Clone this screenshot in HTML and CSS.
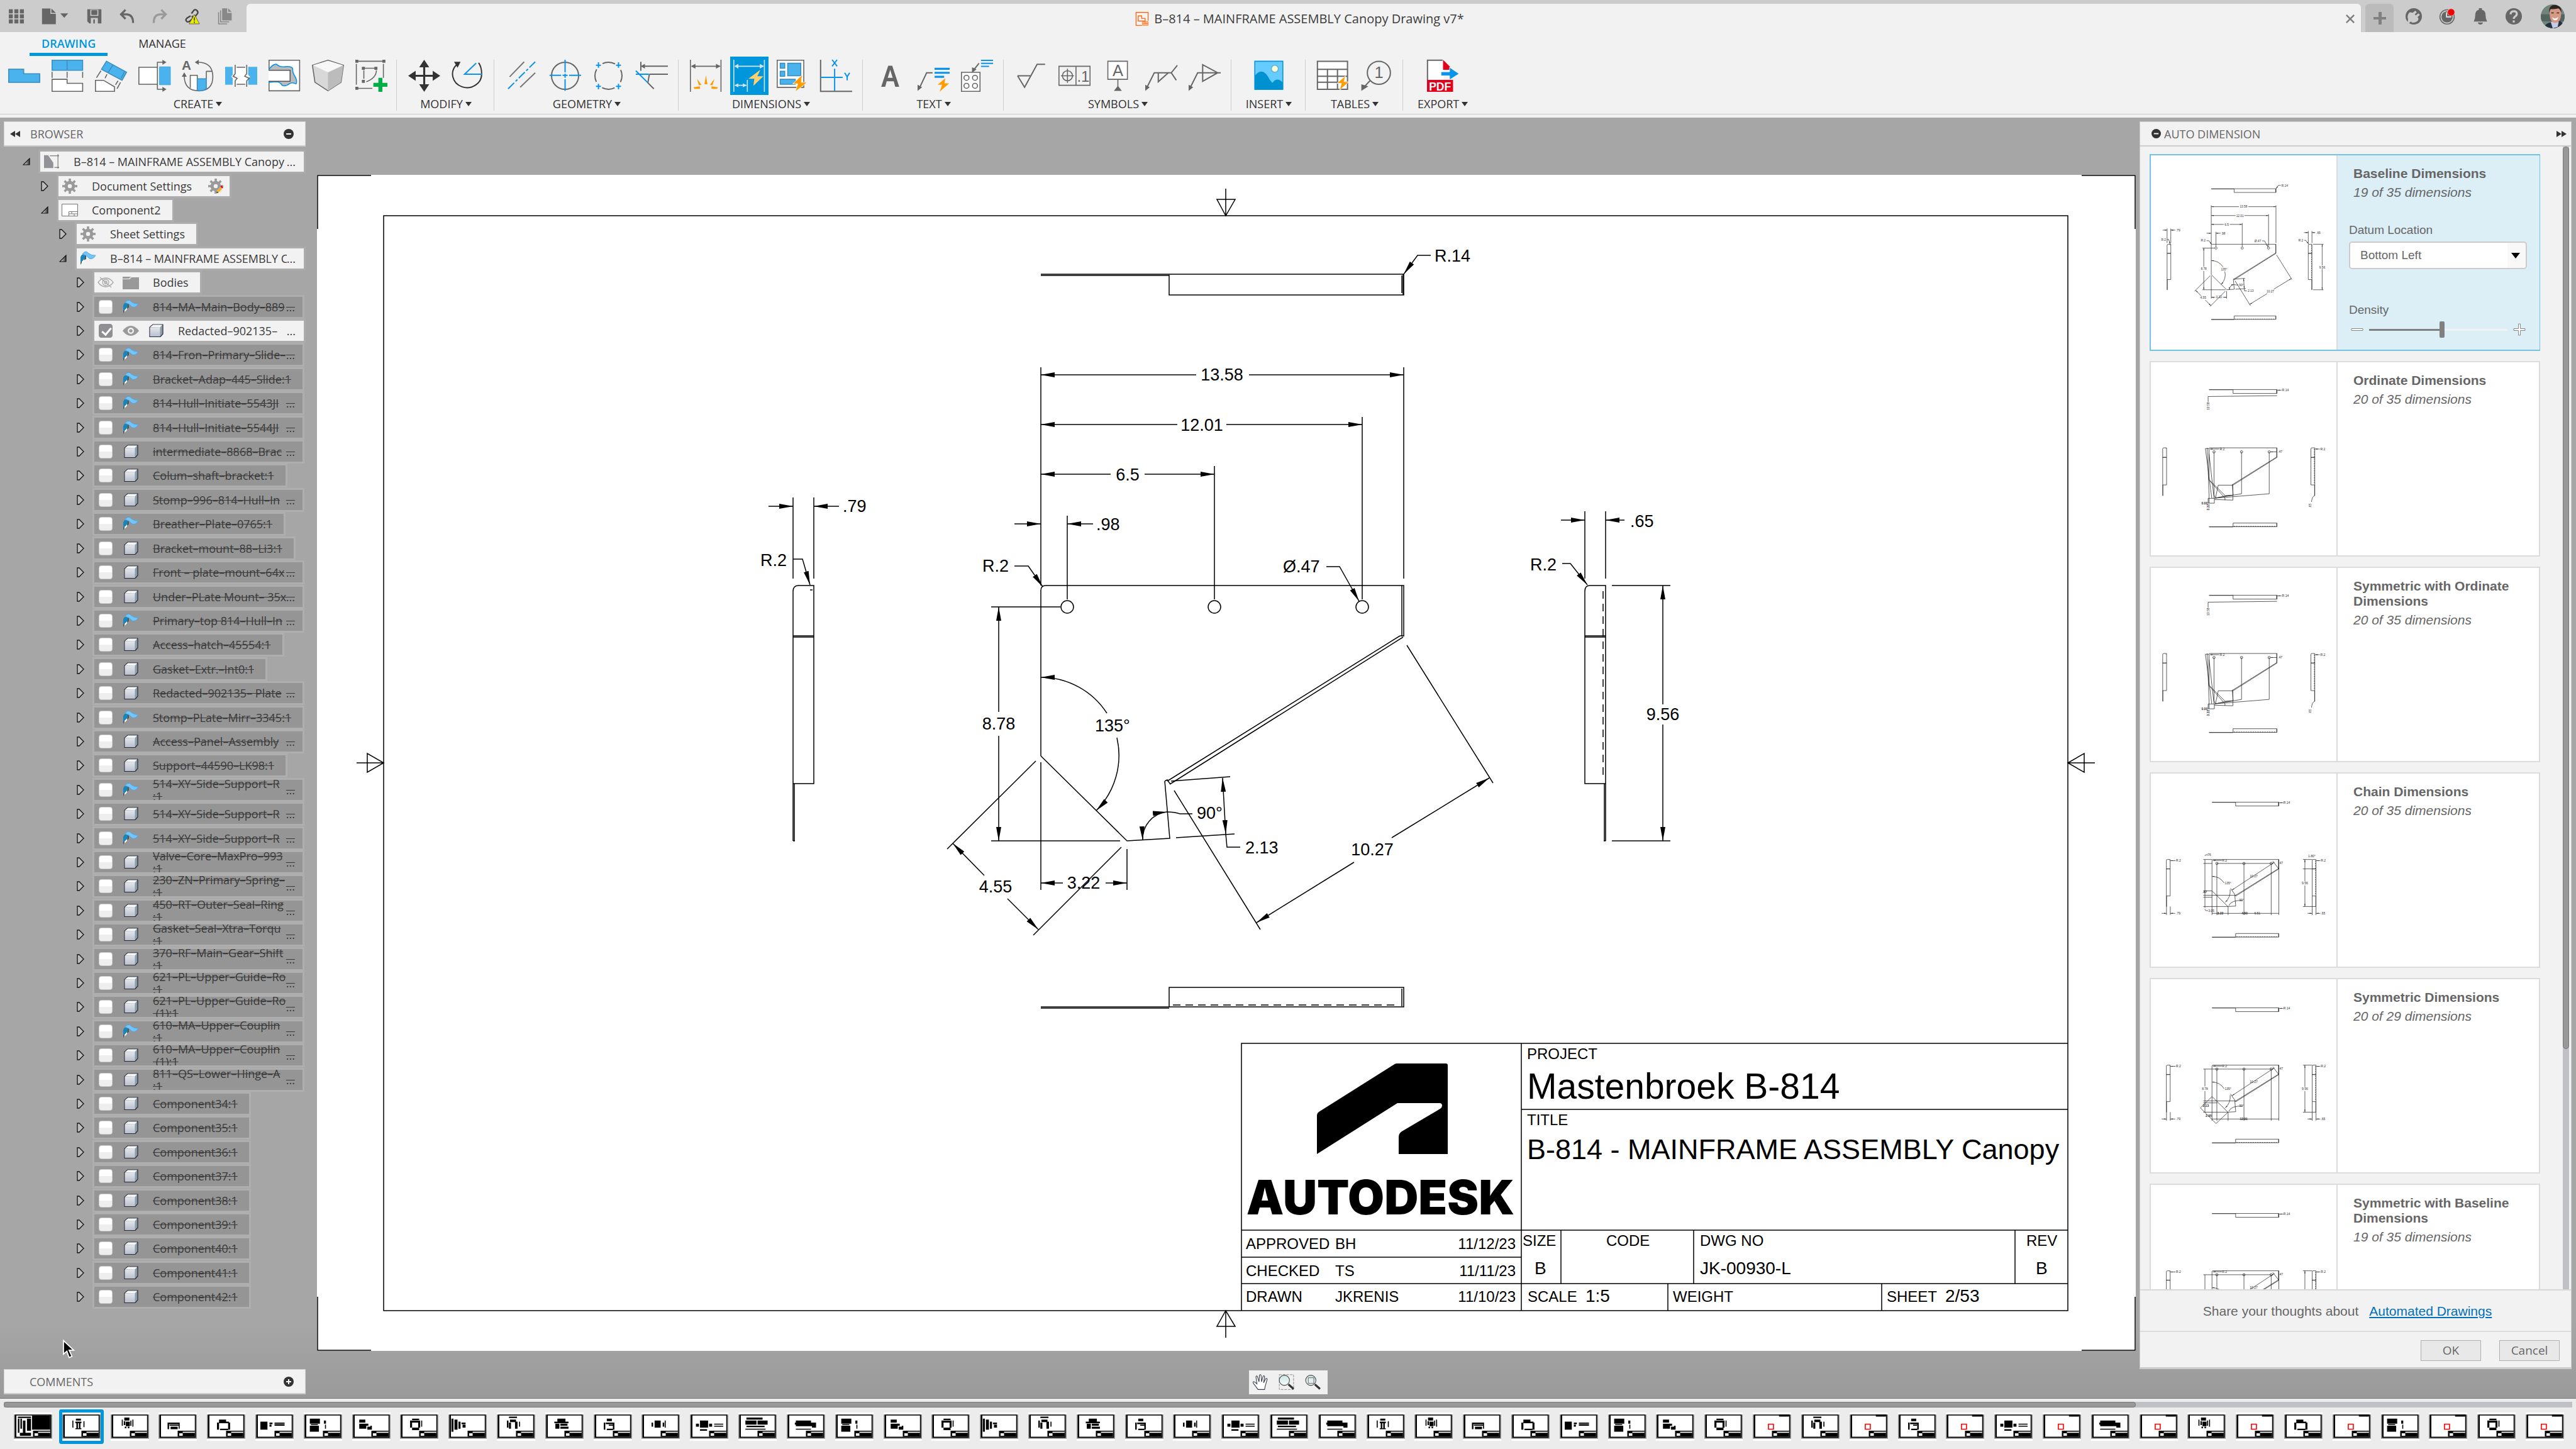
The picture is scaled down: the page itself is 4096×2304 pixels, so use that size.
FILE: index.html
```html
<!DOCTYPE html>
<html lang="en">
<head>
<meta charset="utf-8">
<title>B–814 – MAINFRAME ASSEMBLY Canopy Drawing v7*</title>
<link rel="stylesheet" href="styles.css">
</head>
<body>
<svg class="defs" aria-hidden="true">
  <defs>
    <marker id="ah" viewBox="0 0 22 10" refX="22" refY="5" markerWidth="22" markerHeight="10" markerUnits="userSpaceOnUse" orient="auto-start-reverse"><path d="M0 1L22 5L0 9z" fill="#000"/></marker>
    <linearGradient id="cubeFront" x1="0" y1="0" x2="0" y2="1"><stop offset="0" stop-color="#e4e6ea"/><stop offset="1" stop-color="#b9c0cf"/></linearGradient>
    <linearGradient id="triDark" x1="0" y1="0" x2="1" y2="0"><stop offset="0" stop-color="#fff"/><stop offset="1" stop-color="#333"/></linearGradient>
    <linearGradient id="lens" x1="0" y1="0" x2="0" y2="1"><stop offset="0" stop-color="#c9e6e6"/><stop offset="1" stop-color="#f6fbfb"/></linearGradient>

  <symbol id="i-closed" viewBox="0 0 12 16"><path d="M1 1H4L11 8L4 15H1z" fill="#bcbcbc" stroke="#111" stroke-width="1.300"/></symbol>
  <symbol id="i-open" viewBox="0 0 12 12"><path d="M11 1V11H1z" fill="url(#triDark)" stroke="#111" stroke-width="1.200"/></symbol>
  <symbol id="i-gear" viewBox="0 0 26 26"><g fill="#9a9a9a"><path fill-rule="evenodd" d="M13 4a9 9 0 1 0 0 18a9 9 0 1 0 0-18zM13 9.500a3.500 3.500 0 1 1 0 7a3.500 3.500 0 1 1 0-7z"/><path d="M11 0h4v6h-4zM11 20h4v6h-4zM0 11h6v4H0zM20 11h6v4h-6z"/><path d="M2.500 5.300L5.300 2.500L9 6.200L6.200 9zM17 6.200L20.700 2.500L23.500 5.300L19.800 9zM2.500 20.700L6.200 17L9 19.800L5.300 23.500zM17 19.800L19.800 17L23.500 20.700L20.700 23.500z"/></g></symbol>
  <symbol id="i-gearedit" viewBox="0 0 26 26"><use href="#i-gear"/><path d="M13 26l2-5l8-8l4 4l-8 8z" fill="#f2f2f2"/><path d="M15 21l6-6l3 3l-6 6z" fill="#f9b21c"/><path d="M21 14l2-2l3 3l-2 2z" fill="#f5001e"/><path d="M13.500 25.500l1.500-4l3 3z" fill="#555"/></symbol>
  <symbol id="i-drawing" viewBox="0 0 26 26"><path d="M0 2h7l9 13v9H0z" fill="#929396"/><path d="M10 3h16M24 0v25M18 23h8" fill="none" stroke="#555" stroke-width="1"/></symbol>
  <symbol id="i-page" viewBox="0 0 26 20"><path d="M.5.5h25v19H.500z" fill="#fff" stroke="#777"/><path d="M11.500 19v-6.500h14M11.500 16h14M16 12.500v3.500M20 16v3" fill="none" stroke="#777"/></symbol>
  <symbol id="i-sheet" viewBox="0 0 26 24"><path d="M1 22V11Q2 5 8 6l2 1v6q-5 2-9 9z" fill="#555"/><path d="M1 12Q2 4 8 6v7q-4 1-6 5L1 18z" fill="#1786bd"/><path d="M3 17l4-4v3l-4 4z" fill="#fff"/><path d="M4 5Q9-2 14 4q5 4 11 3q-4 7-10 5q-4-4-6-5z" fill="#74c5fb" stroke="#4ea7dd"/></symbol>
  <symbol id="i-cube" viewBox="0 0 26 24"><path d="M3 6.500L8 2h16v15l-4 4.500H3z" fill="#8a9dab" stroke="#2a2a33" stroke-width="1.200"/><path d="M3.600 6.500H19.500V21H3.600z" fill="url(#cubeFront)"/><path d="M4 6L8.300 2.600H23L19.500 6.500z" fill="#f6f7f8"/></symbol>
  <symbol id="i-folder" viewBox="0 0 26 22"><path d="M0 2h12l2 1h-2l-2 2H0zM0 6h11l3-3h12v19H0z" fill="#999"/></symbol>
  <symbol id="i-eye" viewBox="0 0 26 18"><path d="M0 9Q6 1 13 1t13 8q-6 8-13 8T0 9z" fill="#9a9a9a"/><circle cx="13" cy="9" r="5" fill="#f2f2f2"/><circle cx="13" cy="9" r="2.600" fill="#9a9a9a"/></symbol>
  <symbol id="i-eyeoff" viewBox="0 0 26 18"><g fill="none" stroke="#aaa" stroke-width="1.300"><path d="M1 9Q6 2 13 2t12 7q-5 7-12 7T1 9z"/><circle cx="13" cy="9" r="5"/><circle cx="13" cy="9" r="2"/><path d="M4 1l18 16"/></g></symbol>
  <symbol id="i-minus" viewBox="0 0 16 16"><circle cx="8" cy="8" r="8" fill="#333"/><path d="M4 7h8v2H4z" fill="#fff"/></symbol>
  <symbol id="i-plus" viewBox="0 0 16 16"><circle cx="8" cy="8" r="8" fill="#333"/><path d="M4 7h8v2H4zM7 4h2v8H7z" fill="#fff"/></symbol>
  <symbol id="i-rew" viewBox="0 0 16 10"><path d="M0 5L8 0V10zM8 5L16 0V10z" fill="#333"/></symbol>

  <g id="part" class="dl">
    <path d="M1655 436H2232V469H1859V437M1655 438H1859M2229 438V466M2231 436V469"/>
    <path d="M1655 1601H2232V1570H1859V1601M1655 1603H1859M2229 1572V1600"/>
    <path d="M1865 1598H2225" stroke-dasharray="12 8"/>
    <path d="M1261 1337V940Q1261 931 1270 931H1294V1246H1261M1261 1011H1294M1261 1013H1294M1263 1337V1246M1261 1337H1264M1288 938H1292"/>
    <path d="M2553 1337V931H2528Q2520 931 2520 940V1246H2553M2520 1011H2553M2520 1013H2553M2551 1337V1246M2550 1337H2553"/>
    <path d="M2549 940V1240" stroke-dasharray="12 8"/>
    <path d="M1655 1202V939Q1655 931 1663 931H2232V1012M2229 931V1012M2231 1013L1860 1247M2226 1011L1856 1242M2226 1011H2232M1852 1242L1860 1333L1792 1337L1655 1202M1852 1242L1856 1240L1861 1247"/>
    <circle cx="1697" cy="965" r="10"/><circle cx="1931" cy="965" r="10"/><circle cx="2166" cy="965" r="10"/>
  </g>

  <g id="baseline">
    <g class="dl">
      <path d="M1655 584V931M2232 584V920M2166 663V953M1931 741V953M1697 820V953"/>
      <path d="M1738 833H1697" marker-end="url(#ah)"/>
      <path d="M1902 596H1655" marker-end="url(#ah)"/><path d="M1986 596H2232" marker-end="url(#ah)"/>
      <path d="M1872 675H1655" marker-end="url(#ah)"/><path d="M1950 675H2166" marker-end="url(#ah)"/>
      <path d="M1766 754H1655" marker-end="url(#ah)"/><path d="M1820 754H1931" marker-end="url(#ah)"/>
      <path d="M1613 833H1655" marker-end="url(#ah)"/>
      <path d="M1613 900H1635L1658 933" marker-end="url(#ah)"/>
      <path d="M2109 901H2130L2161 956" marker-end="url(#ah)"/>
      <path d="M1576 965H1686M1576 1337H1781"/>
      <path d="M1588 1132V965" marker-end="url(#ah)"/><path d="M1588 1170V1337" marker-end="url(#ah)"/>
      <path d="M1760 1134A125 125 0 0 0 1655 1077" marker-end="url(#ah)"/>
      <path d="M1776 1173A125 125 0 0 1 1743 1289" marker-end="url(#ah)"/>
      <path d="M1647 1210L1506 1350M1783 1347L1643 1487"/>
      <path d="M1565 1392L1515 1341" marker-end="url(#ah)"/><path d="M1602 1429L1651 1478" marker-end="url(#ah)"/>
      <path d="M1655 1212V1415M1792 1350V1415"/>
      <path d="M1690 1404H1655" marker-end="url(#ah)"/><path d="M1758 1404H1792" marker-end="url(#ah)"/>
      <path d="M1855 1291A43 43 0 0 0 1817 1336" marker-end="url(#ah)" marker-start="url(#ah)"/>
      <path d="M1855 1291Q1868 1291 1876 1294H1896"/>
      <path d="M1862 1242L1956 1235M1870 1332L1963 1326M1949 1326L1951 1347H1972"/>
      <path d="M1944 1237L1949 1326" marker-end="url(#ah)" marker-start="url(#ah)"/>
      <path d="M2237 1026L2374 1245M1867 1257L2004 1478"/>
      <path d="M2213 1332L2368 1237" marker-end="url(#ah)"/><path d="M2153 1371L1998 1467" marker-end="url(#ah)"/>
      <path d="M2275 406H2254L2232 436" marker-end="url(#ah)"/>
      <path d="M1261 791V920M1294 791V920"/>
      <path d="M1222 805H1261" marker-end="url(#ah)"/><path d="M1334 805H1294" marker-end="url(#ah)"/>
      <path d="M1261 889H1276L1288 930" marker-end="url(#ah)"/>
      <path d="M2520 813V920M2553 813V920"/>
      <path d="M2482 827H2520" marker-end="url(#ah)"/><path d="M2583 827H2553" marker-end="url(#ah)"/>
      <path d="M2484 896H2497L2524 930" marker-end="url(#ah)"/>
      <path d="M2563 931H2656M2563 1337H2656"/>
      <path d="M2644 1120V931" marker-end="url(#ah)"/><path d="M2644 1152V1337" marker-end="url(#ah)"/>
    </g>
    <g class="dt">
      <text class="m" x="1943" y="605">13.58</text><text class="m" x="1911" y="685">12.01</text><text class="m" x="1793" y="764">6.5</text>
      <text x="1743" y="843">.98</text><text x="1562" y="909">R.2</text><text x="2040" y="910">Ø.47</text>
      <text class="m" x="1588" y="1160">8.78</text><text class="m" x="1769" y="1163">135°</text><text class="m" x="1583" y="1419">4.55</text>
      <text class="m" x="1723" y="1413">3.22</text><text x="1903" y="1302">90°</text><text x="1980" y="1357">2.13</text><text class="m" x="2182" y="1360">10.27</text>
      <text x="2281" y="416">R.14</text><text x="1340" y="814">.79</text><text x="1209" y="900">R.2</text>
      <text x="2592" y="838">.65</text><text x="2433" y="907">R.2</text><text class="m" x="2644" y="1145">9.56</text>
    </g>
  </g>

  <g id="ordinate">
    <g class="dl">
      <path d="M1647 495L2232 488M1647 495V540M1931 965V1321L1709 1358M2166 965V1321L1709 1358M1624 937L1678 1358M1624 937H1655M1655 981L1697 1358M1697 965V1330L1709 1358M1647 1360H1700V1401H1647zM1709 1358L1733 1248H1857V1375L1700 1370M1655 1205L1790 1358V1375M1700 1360L1790 1340L1857 1333M1655 1337V1400M1640 931L1655 1337"/>
      <path d="M1740 941H1663" marker-end="url(#ah)"/><path d="M2595 941H2556" marker-end="url(#ah)"/><path d="M2230 965H2176" marker-end="url(#ah)"/><path d="M2270 441H2236" marker-end="url(#ah)"/>
      <path d="M2551 1337Q2530 1345 2525 1390"/>
    </g>
    <g class="dt"><text x="1590" y="1412" font-weight="bold">0.00</text><text transform="translate(1656 610) rotate(-90)">13.58</text><text transform="translate(1656 1462) rotate(-90)" font-weight="bold">3.22</text><text x="1745" y="950">R.2</text><text x="2240" y="975">.47</text><text x="2600" y="950">R.2</text><text x="2275" y="450">R.14</text><text transform="translate(2525 1440) rotate(-90)">.65</text></g>
  </g>

  <g id="chain">
    <g class="dl">
      <path d="M1655 1202V1410M1697 965V1410M1794 1337V1410M1931 965V1410M2166 965V1410M2232 931V1410M1655 1396H2232M1697 965H2166"/>
      <path d="M1760 1134A125 125 0 0 0 1655 1077" marker-end="url(#ah)"/><path d="M1812 1190A135 135 0 0 1 1770 1300" marker-end="url(#ah)"/>
      <path d="M2194 954L1827 1195" marker-start="url(#ah)" marker-end="url(#ah)"/>
      <path d="M1857 1240L1815 1180M2232 1013L2180 945M1800 1330Q1820 1280 1920 1285"/>
      <path d="M1262 1337V1410M1295 1337V1410M2520 1246V1410M2553 1337V1410M2440 931H2520M2440 1337H2553"/>
      <path d="M1220 1396H1262" marker-end="url(#ah)"/><path d="M1337 1396H1295" marker-end="url(#ah)"/><path d="M2480 1396H2520" marker-end="url(#ah)"/><path d="M2590 1396H2553" marker-end="url(#ah)"/>
      <path d="M2457 1120V931" marker-end="url(#ah)"/><path d="M2457 1155V1337" marker-end="url(#ah)"/>
      <path d="M2270 441H2236" marker-end="url(#ah)"/><path d="M1340 941H1296" marker-end="url(#ah)"/><path d="M2590 941H2556" marker-end="url(#ah)"/><path d="M1740 939H1663" marker-end="url(#ah)"/>
    </g>
    <g class="dt"><text x="1345" y="1405">.79</text><text x="1345" y="950">R.2</text><text x="2595" y="950">R.2</text><text x="2595" y="1405">.65</text><text class="m" x="2457" y="1147">9.56</text><text x="2272" y="450">R.14</text><text class="m" x="2015" y="1085">10.27</text><text x="1742" y="950">R.2</text><text x="1765" y="1145">135°</text><text x="1890" y="1293">90°</text><text x="2230" y="972">.47</text></g>
  </g>
  <g id="chainleft">
    <g class="dl"><path d="M1594 931V1349M1580 931H1655M1580 965H1655M1580 1202H1655M1580 1240H1857M1580 1257H1655M1580 1337H1794M1594 1360Q1594 1375 1620 1372M1594 900Q1594 888 1620 890M2440 1012H2520"/></g>
    <g class="dt"><text x="1610" y="900">.76</text><text x="1622" y="1382">3.05</text><text x="1575" y="1222" font-weight="bold">.87</text><text x="1700" y="1405" font-weight="bold">3.22</text><text x="1910" y="1405" font-weight="bold">4.50</text><text x="2020" y="1405">6.51</text><text x="2485" y="910">1.80°</text></g>
  </g>
  <g id="symleft">
    <g class="dl"><path d="M1594 965V1115M1594 1155V1337M1580 965H1697M1580 1240H1857M1580 1257H1700M1580 1337H1794M1655 1202L1555 1300L1690 1435L1794 1337"/></g>
    <g class="dt"><text class="m" x="1594" y="1147">8.78</text><text x="1575" y="1294" font-weight="bold">2.13</text><text x="1600" y="1378" font-weight="bold">2.95</text><text x="1895" y="1405" font-weight="bold">12.01</text></g>
  </g>
  </defs>
</svg>

<header class="titlebar">
  <div class="quick">
    <button aria-label="Data panel"><svg viewBox="0 0 30 30"><path d="M0 1h8v8H0zM11 1h8v8h-8zM22 1h8v8h-8zM0 11h8v8H0zM11 11h8v8h-8zM22 11h8v8h-8zM0 21h8v8H0zM11 21h8v8h-8zM22 21h8v8h-8z" fill="#666"/></svg></button>
    <button class="file" aria-label="File"><svg viewBox="0 0 56 32"><path d="M1 0h17v11h11v21H1zM20 0l9 9h-9z" fill="#666"/><path d="M38 10h16l-8 9z" fill="#666"/></svg></button>
    <button aria-label="Save"><svg viewBox="0 0 30 30"><path fill-rule="evenodd" d="M1 1h28v28H5l-4-4zM7 2v12h16V2zM8 18v11h14V18zM9 3h12v9H9zM13 21h3v8h-3z" fill="#666"/><path d="M10 3h10v9H10z" fill="#666"/></svg></button>
    <button aria-label="Undo"><svg viewBox="0 0 30 30"><path d="M12 2L3 11l9 9M4 11h11q12 1 12 17" fill="none" stroke="#666" stroke-width="4"/></svg></button>
    <button aria-label="Redo"><svg viewBox="0 0 30 30"><path d="M18 2l9 9l-9 9M26 11H15Q3 12 3 28" fill="none" stroke="#999" stroke-width="4"/></svg></button>
    <button aria-label="Broken links"><svg viewBox="0 0 32 32"><g fill="none" stroke="#444" stroke-width="3"><path d="M14 10l5-7q4-3 7 1t0 7l-5 6q-4 2-6-1"/><path d="M12 15l-8 5q-3 3-1 6t6 1l7-6q2-3-1-6"/></g><path d="M20 12l11 20H9z" fill="#e8ec00" stroke="#444"/><path d="M19 18h2v7h-2zM19 27h2v3h-2z" fill="#333"/></svg></button>
    <button aria-label="Copy"><svg viewBox="0 0 30 32"><path d="M9 0h10v9h9v15H9zM21 0l7 7h-7z" fill="#888"/><path d="M6 4v23h17M2 8v23h17" fill="none" stroke="#888" stroke-width="2"/></svg></button>
  </div>
  <div class="doctab">
    <span class="doctitle"><svg class="docicon" viewBox="0 0 30 32"><path d="M15 31H1V1h28v19" fill="none" stroke="#ff6a13" stroke-width="2"/><path d="M6 9h8v6h8v6H6z" fill="none" stroke="#ff6a13" stroke-width="2"/><path d="M16 22h13v9H16z" fill="#ffb58a" stroke="#ff6a13"/><path d="M16 27h13M22 22v5" stroke="#ff6a13"/></svg>B–814 – MAINFRAME ASSEMBLY Canopy Drawing v7*</span>
    <button class="close" aria-label="Close"><svg viewBox="0 0 16 16"><path d="M1 1l14 14M15 1L1 15" stroke="#808080" stroke-width="3"/></svg></button>
  </div>
  <button class="newtab" aria-label="New tab"><svg viewBox="0 0 20 20"><path d="M8 0h5v8h7v4h-7v8H8v-8H0V8h8z" fill="#808080"/></svg></button>
  <div class="account">
    <button aria-label="Extensions"><svg viewBox="0 0 32 32"><circle cx="16" cy="16" r="16" fill="#666"/><path d="M5 22Q2 14 8 8l6 1l5-4l3 3l-4 4l2 2l5-4l3 3l-5 5l2 1q1 6-5 8q-6 3-10-1l-4 4l-2-2z" fill="#ccc"/></svg></button>
    <button aria-label="Job status"><svg viewBox="0 0 32 32"><circle cx="16" cy="17" r="14" fill="none" stroke="#666" stroke-width="2"/><circle cx="16" cy="17" r="11" fill="#666"/><path d="M15 8v9h9" fill="none" stroke="#eee" stroke-width="2"/><circle cx="24" cy="8" r="7" fill="#f50000" stroke="#ccc"/></svg></button>
    <button aria-label="Notifications"><svg viewBox="0 0 32 32"><path d="M13 0h6v3q7 2 7 10q0 8 3 13H3q3-5 3-13q0-8 7-10zM11 28h10q-1 4-5 4t-5-4z" fill="#666"/></svg></button>
    <button aria-label="Help"><svg viewBox="0 0 32 32"><circle cx="16" cy="16" r="16" fill="#666"/><path d="M10 12q0-6 6-6t6 5q0 3-3 5t-3 5" fill="none" stroke="#ccc" stroke-width="4"/><path d="M14 24h4v4h-4z" fill="#ccc"/></svg></button>
    <button class="avatar" aria-label="Profile"><svg viewBox="0 0 48 48"><path d="M0 0h48v48H0z" fill="#72847c"/><path d="M0 20h48v14H0z" fill="#526560"/><path d="M6 48Q8 38 20 36l8 2l10-5q7 2 8 15z" fill="#26333f"/><path d="M20 35h16l-2 10l-10 3z" fill="#c9cbe6"/><path d="M18 14Q18 3 29 3t12 12q0 22-12 22T18 14z" fill="#d59a86"/><path d="M17 17Q15 1 29 1q14 1 12 16q-2-8-6-9q-9 2-15 1q-2 3-3 8z" fill="#2b2320"/><path d="M23 26q6 5 12-1q-1 7-6 7t-6-6z" fill="#fff"/><path d="M21 17h5M32 17h5" stroke="#3b2a26" stroke-width="2"/></svg></button>
  </div>
</header>

<nav class="tabs"><a class="on" href="#drawing">DRAWING</a><a href="#manage">MANAGE</a></nav>

<section class="ribbon">
  <div class="group first">
    <div class="icons">
      <button aria-label="Base view"><svg viewBox="0 0 64 64"><path d="M1 19h30v9h32v17H1z" fill="#4ab3ee" stroke="#3a8fc0" stroke-width="2"/></svg></button>
      <button aria-label="Projected view"><svg viewBox="0 0 64 64"><path d="M1 1h61v20H1zM31 1v20" fill="#4ab3ee" stroke="#3a8fc0" stroke-width="2"/><path d="M1 24v12M31 24v12M62 24v12" stroke="#666" stroke-width="2"/><path d="M1 39h30v8h31v16H1z" fill="#fff" stroke="#666" stroke-width="2"/></svg></button>
      <button aria-label="Auxiliary view"><svg viewBox="0 0 64 64"><path d="M23 3L63 25L54 41L13 19zM36 10L26 26M59 24L52 37" fill="#4ab3ee" stroke="#3a8fc0" stroke-width="2"/><path d="M12 22L3 36M24 29L20 37M46 42L41 50M51 45L44 58" stroke="#666" stroke-width="2"/><path d="M1 41h16L39 54v9H1z" fill="#fff" stroke="#666" stroke-width="2"/></svg></button>
      <button aria-label="Section view"><svg viewBox="0 0 64 64"><path d="M38 15H1v34H38" fill="#fff" stroke="#666" stroke-width="2"/><path d="M42 14h22v36H42z" fill="#4ab3ee" stroke="#3a9fd8" stroke-width="1"/><path d="M50 5H38V59H50" fill="none" stroke="#666" stroke-width="2"/><path d="M48 0l8 5l-8 5zM48 54l8 5l-8 5z" fill="#666"/></svg></button>
      <button aria-label="Detail view"><svg viewBox="0 0 64 64"><path d="M34 5Q62 6 62 34T34 62T5 34V28" fill="#f2f2f2" stroke="#666" stroke-width="2"/><path d="M26 5l8-5v10zM0 34l5-9l5 9z" fill="#666"/><path d="M17 56V31H31V60M49 23H61M49 23V38" fill="#fff" stroke="#666" stroke-width="2"/><path d="M31 38H49V58Q40 64 31 61z" fill="#4ab3ee" stroke="#3a8fc0" stroke-width="2"/><text x="0" y="20" class="ib" font-size="26">A</text></svg></button>
      <button aria-label="Break view"><svg viewBox="0 0 64 64"><path d="M0 14h15v16l-3 3l3 4v13H0zM46 14h18v36H46V38l4-4l-4-4z" fill="#4ab3ee"/><path d="M20 15H43V49H20z" fill="#fff"/><path d="M20 10V28L16 33L24 37L20 42V54M43 10V28L39 33L48 37L43 42V54M23 15H40M23 49H40" fill="none" stroke="#666" stroke-width="2"/></svg></button>
      <button aria-label="Breakout view"><svg viewBox="0 0 64 64"><path d="M1 1h61v61H1z" fill="#fff" stroke="#666" stroke-width="2"/><path d="M1 19Q9 8 16 9q6 6 16 5q12-2 16 3q0 10 4 15q6 10 3 16q-8-3-12-1q-8 7-16 4q-4-7-12-7L1 45z" fill="#bbb" stroke="#0a93ea" stroke-width="2"/><path d="M0 21H43V43H0" fill="#fff" stroke="#555" stroke-width="2"/></svg></button>
      <button aria-label="Box"><svg viewBox="0 0 64 64"><path d="M32 1L63 11L58 45L32 62L6 45L1 11z" fill="#d8d8d8" stroke="#666" stroke-width="2"/><path d="M32 25L63 11L58 45L32 62z" fill="#bcbcbc"/><path d="M32 2L62 11L32 25L2 11z" fill="#f8f8f8"/></svg></button>
      <button aria-label="Insert sketch"><svg viewBox="0 0 64 64"><path d="M3 3H57M16 17H40M3 57H34M2 8V50M56 8V36M17 21V38M42 21Q42 36 22 44" fill="none" stroke="#666" stroke-width="2"/><path d="M0 0h6v6H0zM54 0h6v6h-6zM13 14h6v6h-6zM38 14h6v6h-6zM13 40h6v6h-6zM0 54h6v6H0z" fill="#666"/><path d="M46 36h8v10h10v8H54v10h-8V54H36v-8h10z" fill="#00ad47"/></svg></button>
    </div>
    <button class="menu">CREATE</button>
  </div>
  <div class="group">
    <div class="icons">
      <button aria-label="Move"><svg viewBox="0 0 64 64"><path d="M32 0l10 15h-8v15h15V22l15 10l-15 10V34H34V49h8L32 64L22 49h8V34H15v8L0 32l15-10v8H30V15H22z" fill="#333"/></svg></button>
      <button aria-label="Rotate"><svg viewBox="0 0 64 64"><path d="M60 28A29 27 0 1 1 10 10M54 6Q60 14 60 28" fill="none" stroke="#333" stroke-width="2.500"/><path d="M5 4h13l-6 12z" fill="#333"/><path d="M61 29H26L49 7" fill="none" stroke="#0a93ea" stroke-width="2.500"/></svg></button>
    </div>
    <button class="menu">MODIFY</button>
  </div>
  <div class="group">
    <div class="icons">
      <button aria-label="Centerline"><svg viewBox="0 0 64 64"><path d="M8 34L37 4M29 55L59 26" stroke="#777" stroke-width="2.500"/><path d="M5 58L59 4" stroke="#0a93ea" stroke-width="2.500" stroke-dasharray="17 4 5 4"/></svg></button>
      <button aria-label="Center mark"><svg viewBox="0 0 64 64"><circle cx="32" cy="32" r="27" fill="none" stroke="#666" stroke-width="2.500"/><path d="M32 0V25M32 28V36M32 39V62M1 31H24M27 31H37M40 31H64" stroke="#0a93ea" stroke-width="2.500"/></svg></button>
      <button aria-label="Center mark pattern"><svg viewBox="0 0 64 64"><circle cx="32" cy="32" r="27" fill="none" stroke="#666" stroke-width="2.500" stroke-dasharray="26 16.400" stroke-dashoffset="13"/><path d="M12 5v11M7 11h10M52 5v11M47 11h10M12 48v11M7 53h10M52 48v11M47 53h10" stroke="#0a93ea" stroke-width="2.500"/></svg></button>
      <button aria-label="Edge extension"><svg viewBox="0 0 64 64"><path d="M10 4V22M12 13H64M27 29H64M27 29L24 46L36 58" fill="none" stroke="#666" stroke-width="2.500"/><path d="M10 13l8-5v10z" fill="#666"/><path d="M0 22L24 46M0 29H26" stroke="#0a93ea" stroke-width="2.500"/></svg></button>
    </div>
    <button class="menu">GEOMETRY</button>
  </div>
  <div class="group">
    <div class="icons">
      <button aria-label="Dimension"><svg viewBox="0 0 64 64"><path d="M1 0V64M62 0V64M4 13H60" stroke="#666" stroke-width="2"/><path d="M2 13l9-5v10zM61 13l-9-5v10z" fill="#666"/><path d="M32 31l3 18h-6zM14 38l9 12l-5 1zM49 38l-9 12l5 1zM7 55l13-2v5H9zM56 55l-13-2v5h11z" fill="#ff9c00"/></svg></button>
      <button class="sel" aria-label="Auto dimension"><svg viewBox="0 0 64 64"><path d="M1 0V64M62 0V64M28 40V64M4 13H60M4 51H26" stroke="#cfe6f2" stroke-width="2"/><path d="M2 13l8-5v10zM61 13l-8-5v10zM2 51l8-4v8zM27 51l-8-4v8z" fill="#cfe6f2"/><path d="M54 20L30 38h12l-2 14l20-19H48z" fill="#ffcf70"/></svg></button>
      <button aria-label="Auto drawing"><svg viewBox="0 0 64 64"><path d="M1 1h53v54H1z" fill="#fff" stroke="#666" stroke-width="2"/><path d="M7 7h9v10H7zM22 7h26v25H22zM7 23h9v10H7zM7 39h30v10H7z" fill="#4ab3ee" stroke="#3a8fc0" stroke-width="2"/><path d="M51 30L32 48h10l-5 16l24-19H49z" fill="#ff9c00" stroke="#fff"/></svg></button>
      <button aria-label="Ordinate dimension"><svg viewBox="0 0 64 64"><path d="M1 0V63H64" fill="none" stroke="#666" stroke-width="2.500"/><path d="M29 18V62M1 35H45M24 0L34 13M34 0L24 13M49 26L54 34L59 26M54 34V41" fill="none" stroke="#0a93ea" stroke-width="2.500"/></svg></button>
    </div>
    <button class="menu">DIMENSIONS</button>
  </div>
  <div class="group">
    <div class="icons">
      <button aria-label="Text"><svg viewBox="0 0 64 64"><path fill-rule="evenodd" d="M14 54L28 12h8L50 54H42L39 43H25L22 54zM27 36H37L32 20z" fill="#666"/></svg></button>
      <button aria-label="Leader text"><svg viewBox="0 0 64 64"><path d="M30 26H18L4 56" fill="none" stroke="#666" stroke-width="2.500"/><path d="M0 62V50l9 5z" fill="#666"/><path d="M34 16h30v4H34zM34 24h30v4H34zM34 32h19v4H34z" fill="#0a93ea"/><path d="M55 37L40 50h9l-5 14l19-17H54z" fill="#ff9c00"/></svg></button>
      <button aria-label="Hole note"><svg viewBox="0 0 64 64"><path d="M1 25h37v38H1z" fill="#fff" stroke="#666" stroke-width="2"/><circle cx="11" cy="36" r="5" class="o"/><circle cx="28" cy="36" r="5" class="o"/><circle cx="11" cy="52" r="5" class="o"/><circle cx="28" cy="52" r="5" class="o"/><path d="M36 7L24 22" stroke="#666" stroke-width="2.500"/><path d="M22 15l9 4l-9 7z" fill="#666"/><path d="M40 0h24v2.500H40zM40 6h24v2.500H40zM40 12h16v2.500H40z" fill="#0a93ea"/></svg></button>
    </div>
    <button class="menu">TEXT</button>
  </div>
  <div class="group">
    <div class="icons">
      <button aria-label="Surface texture"><svg viewBox="0 0 64 64"><path d="M5 32H32M5 32L19 55L44 9H60" fill="none" stroke="#666" stroke-width="2.500"/></svg></button>
      <button aria-label="Feature control frame"><svg viewBox="0 0 64 64"><path d="M1 13h62v38H1zM35 13V51" fill="none" stroke="#666" stroke-width="2"/><circle cx="18" cy="32" r="10" class="o"/><path d="M18 18V46M5 32H31" stroke="#666" stroke-width="2"/><text x="37" y="44" class="ia" font-size="30">.1</text></svg></button>
      <button aria-label="Datum identifier"><svg viewBox="0 0 64 64"><path d="M12 3h39v36H12z" fill="#fff" stroke="#666" stroke-width="2"/><path d="M32 40V55" stroke="#666" stroke-width="2"/><path d="M24 62l8-10l8 10z" fill="#666"/><text x="32" y="33" class="ia" font-size="32" text-anchor="middle">A</text></svg></button>
      <button aria-label="Welding"><svg viewBox="0 0 64 64"><path d="M2 58L18 26H52M26 26V44L46 26M64 11L52 26L62 41" fill="none" stroke="#666" stroke-width="2.500"/><path d="M0 62V50l9 5z" fill="#666"/></svg></button>
      <button aria-label="Taper and slope"><svg viewBox="0 0 64 64"><path d="M2 58L18 26H64M28 10V43L58 26z" fill="none" stroke="#666" stroke-width="2.500"/><path d="M0 62V50l9 5z" fill="#666"/></svg></button>
    </div>
    <button class="menu">SYMBOLS</button>
  </div>
  <div class="group insert">
    <div class="icons">
      <button aria-label="Insert image"><svg viewBox="0 0 64 64"><path d="M4 3h56v56H4z" fill="#66ccff" stroke="#0a93d6" stroke-width="2"/><path d="M4 32Q20 12 34 40l5 6q10-13 21 0v14H4z" fill="#0092d0"/><circle cx="44" cy="18" r="7" fill="#ffffd0" stroke="#5ab4e0" stroke-width="2"/></svg></button>
    </div>
    <button class="menu">INSERT</button>
  </div>
  <div class="group">
    <div class="icons">
      <button aria-label="Table"><svg viewBox="0 0 64 64"><path d="M1 3h60v56H1zM1 19H61M1 33H61M1 45H61M21 19V59M41 19V59" fill="#fff" stroke="#666" stroke-width="2.500"/><path d="M57 32L40 47h9l-4 14l19-17H54z" fill="#ff9c00" stroke="#fff"/></svg></button>
      <button aria-label="Balloon"><svg viewBox="0 0 64 64"><circle cx="37" cy="26" r="23" fill="none" stroke="#666" stroke-width="2.500"/><path d="M19 42L6 56" stroke="#666" stroke-width="2.500"/><path d="M2 49l14 4L2 62z" fill="#666"/><text x="37" y="37" class="ia" font-size="32" text-anchor="middle">1</text></svg></button>
    </div>
    <button class="menu">TABLES</button>
  </div>
  <div class="group last">
    <div class="icons">
      <button aria-label="Export PDF"><svg viewBox="0 0 64 64"><path d="M1 1H33V40H1z" fill="#fff"/><path d="M1 40V1H31" fill="none" stroke="#666" stroke-width="2.500"/><path d="M32 0l14 14v6H32zM0 40h52v24H0z" fill="#e2001a"/><path d="M28 24h17V15L64 28L45 40V32H28z" fill="#0a93ea" stroke="#fff"/><text x="26" y="61" font-size="22" text-anchor="middle" fill="#fff" class="ib">PDF</text></svg></button>
    </div>
    <button class="menu">EXPORT</button>
  </div>
</section>

<main class="work">
  <aside class="left">
    <div class="bar"><svg class="rew"><use href="#i-rew"/></svg><span>BROWSER</span><button aria-label="Collapse"><svg><use href="#i-minus"/></svg></button></div>
    <ul class="tree" id="tree"></ul>
    <div class="bar comments"><span>COMMENTS</span><button aria-label="Expand"><svg><use href="#i-plus"/></svg></button></div>
    <svg class="cursor" viewBox="0 0 20 32"><path d="M1 1V25L7 20L11 31L16 29L11 18H19z" fill="#000" stroke="#fff" stroke-width="2"/></svg>
  </aside>

  <div class="canvas">
    <svg class="sheet" viewBox="504 278 2892 1870" stroke-width="1.500">
      <path d="M504 278H3396V2148H504z" fill="#fff"/>
      <g class="dl">
        <path d="M505 364V279H590M3310 279H3395V364M505 2062V2147H590M3310 2147H3395V2062"/>
        <path d="M610 343H3288V2084H610z"/>
        <path d="M1949 300V343M1935 317H1964L1949 343zM1949 2127V2084M1935 2109H1964L1949 2084zM567 1213H610M584 1198V1228L610 1213zM3331 1213H3288M3314 1198V1228L3288 1213z"/>
      </g>
      <use href="#part"/><use href="#baseline"/>
      <g class="dl">
        <path d="M1974 2084V1659H3288M1974 1956H3288M1974 2041H3288M2419 1764H3288M1974 1999H2419M2419 1659V2084M2482 1956V2041M2693 1956V2041M3204 1956V2041M2652 2041V2084M2992 2041V2084"/>
      </g>
      <path d="M2221 1691H2299Q2302 1691 2302 1694V1835H2224V1808Q2224 1802 2229 1799L2290 1763Q2293 1761 2293 1758Q2293 1754 2289 1754H2222L2094 1835V1773Q2094 1770 2097 1768L2216 1693Q2218 1691 2221 1691z"/>
      <text x="2195" y="1931" class="brand">AUTODESK</text>
      <g class="tb">
        <text x="2428" y="1684">PROJECT</text><text x="2428" y="1789">TITLE</text>
        <text x="2421" y="1981">SIZE</text><text x="2554" y="1981">CODE</text><text x="2703" y="1981">DWG NO</text><text x="3222" y="1981">REV</text>
        <text x="1981" y="1986">APPROVED</text><text x="1981" y="2029">CHECKED</text><text x="1981" y="2070">DRAWN</text>
        <text x="2123" y="1986">BH</text><text x="2123" y="2029">TS</text><text x="2123" y="2070">JKRENIS</text>
        <text x="2410" y="1986" text-anchor="end">11/12/23</text><text x="2410" y="2029" text-anchor="end">11/11/23</text><text x="2410" y="2070" text-anchor="end">11/10/23</text>
        <text x="2429" y="2070">SCALE</text><text x="2660" y="2070">WEIGHT</text><text x="3000" y="2070">SHEET</text>
      </g>
      <g class="tv"><text x="2440" y="2026">B</text><text x="2703" y="2026">JK-00930-L</text><text x="3237" y="2026">B</text><text x="2521" y="2070">1:5</text><text x="3093" y="2070">2/53</text></g>
      <text x="2428" y="1747" class="proj">Mastenbroek B-814</text>
      <text x="2428" y="1843" class="ttl">B-814 - MAINFRAME ASSEMBLY Canopy</text>
    </svg>
  </div>

  <aside class="right">
    <div class="rhead"><svg><use href="#i-minus"/></svg><h2>AUTO DIMENSION</h2><svg class="fwd"><use href="#i-rew"/></svg></div>
    <div class="rbody">
      <div class="cards">
        <article class="card active">
          <svg viewBox="1127 138 1633 1722" stroke-width="4"><use href="#part"/><use href="#baseline"/></svg>
          <div class="info"><h3>Baseline Dimensions</h3><p>19 of 35 dimensions</p>
            <label class="f1" for="datum">Datum Location</label>
            <div class="pick"><select id="datum"><option>Bottom Left</option></select><svg viewBox="0 0 14 9"><path d="M0 0h14L7 9z"/></svg></div>
            <label class="f2" for="density">Density</label>
            <div class="range"><svg viewBox="0 0 20 20"><path d="M1 8.500h18v3H1z" fill="#fff" stroke="#888"/></svg><input id="density" type="range" min="0" max="100" value="53"><svg viewBox="0 0 20 20"><path d="M8.500 1h3v7.500H19v3h-7.500V19h-3v-7.500H1v-3h7.500z" fill="#fff" stroke="#888"/></svg></div>
          </div>
        </article>
        <article class="card"><svg viewBox="1168 204 1561 1640" stroke-width="4"><use href="#part"/><use href="#ordinate"/></svg><div class="info"><h3>Ordinate Dimensions</h3><p>20 of 35 dimensions</p></div></article>
        <article class="card"><svg viewBox="1168 204 1561 1640" stroke-width="4"><use href="#part"/><use href="#ordinate"/></svg><div class="info"><h3>Symmetric with Ordinate Dimensions</h3><p>20 of 35 dimensions</p></div></article>
        <article class="card"><svg viewBox="1135 189 1586 1667" stroke-width="4"><use href="#part"/><use href="#chain"/><use href="#chainleft"/></svg><div class="info"><h3>Chain Dimensions</h3><p>20 of 35 dimensions</p></div></article>
        <article class="card"><svg viewBox="1135 189 1586 1667" stroke-width="4"><use href="#part"/><use href="#chain"/><use href="#symleft"/></svg><div class="info"><h3>Symmetric Dimensions</h3><p>20 of 29 dimensions</p></div></article>
        <article class="card"><svg viewBox="1135 189 1586 1667" stroke-width="4"><use href="#part"/><use href="#chain"/><use href="#symleft"/></svg><div class="info"><h3>Symmetric with Baseline Dimensions</h3><p>19 of 35 dimensions</p></div></article>
      </div>
      <div class="vscroll"><i></i></div>
    </div>
    <div class="share">Share your thoughts about<a href="#automated">Automated Drawings</a></div>
    <div class="actions"><button>OK</button><button>Cancel</button></div>
  </aside>

  <div class="navbar">
    <button aria-label="Pan"><svg viewBox="0 0 30 32"><path d="M11 30Q7 24 2 18Q0 14 4 15L9 19L7 5Q8 2 10 5L13 15L14 2Q16 0 17 2L18 15L21 4Q24 2 24 5L22 17L26 9Q29 7 29 10L25 24L24 30z" fill="#fff" stroke="#333a48" stroke-width="1.300"/></svg></button>
    <button aria-label="Zoom window"><svg viewBox="0 0 30 32"><path d="M1 1h28v29H1z" fill="none" stroke="#777" stroke-dasharray="5 2"/><circle cx="11" cy="12" r="10" fill="url(#lens)" stroke="#444" stroke-width="1.300"/><path d="M19 20l10 9" stroke="#333" stroke-width="4"/></svg></button>
    <button aria-label="Zoom fit"><svg viewBox="0 0 30 32"><circle cx="11" cy="12" r="10" fill="url(#lens)" stroke="#444" stroke-width="1.300"/><path d="M6 7h11v11H6z" fill="#e6edef" stroke="#444"/><path d="M19 20l10 9" stroke="#333" stroke-width="4"/></svg></button>
  </div>
</main>

<footer class="film">
  <div class="hscroll"><i></i></div>
  <div class="strip" id="strip"></div>
</footer>
<script src="app.js"></script>
</body>
</html>
```
FILE: styles.css
```css
* { box-sizing: border-box; }
html, body { margin: 0; height: 100%; }
body {
  display: flex; flex-direction: column; height: 100vh; overflow: hidden;
  background: #a6a6a6; color: #3c3c3c;
  font-family: "Open Sans", "Noto Sans", sans-serif; font-size: 18px;
}
button { font: inherit; color: inherit; background: none; border: 0; padding: 0; margin: 0; display: block; }
svg { display: block; overflow: visible; }
.defs { position: absolute; width: 0; height: 0; overflow: hidden; }

/* title bar */
.titlebar { flex: none; height: 51px; background: #ccc; display: flex; align-items: flex-end; }
.quick { display: flex; align-items: center; gap: 28px; height: 51px; padding: 0 22px 0 14px; }
.quick svg { width: 24px; height: 26px; }
.quick .file svg { width: 44px; }
.doctab { flex: 1; height: 45px; background: #f2f2f2; border-radius: 6px 6px 0 0; display: flex; align-items: center; padding: 2px 10px 0; }
.doctitle { flex: 1; display: flex; align-items: center; justify-content: center; gap: 7px; font-size: 20px; line-height: 28px; }
.docicon { width: 24px; height: 22px; }
.close svg { width: 14px; height: 14px; }
.newtab { width: 45px; height: 45px; margin-left: 7px; background: #bbb; border-radius: 6px 6px 0 0; display: flex; align-items: center; justify-content: center; }
.newtab svg { width: 20px; height: 20px; }
.account { display: flex; align-items: center; gap: 27px; height: 51px; padding: 0 18px 0 19px; }
.account svg { width: 26px; height: 26px; }
.account .avatar { width: 38px; height: 38px; border-radius: 50%; overflow: hidden; margin-left: 3px; }
.account .avatar svg { width: 38px; height: 38px; }

/* ribbon */
.tabs { flex: none; height: 38px; background: #f2f2f2; display: flex; padding-left: 47px; gap: 29px; }
.tabs a { padding: 0 20px; height: 38px; line-height: 36px; color: #333; text-decoration: none; }
.tabs .on { padding: 0 19px; color: #0096db; font-weight: 600; border-bottom: 5px solid #0096db; }
.ribbon { flex: none; height: 98px; background: #f2f2f2; display: flex; padding-top: 6px; border-bottom: 5px solid #f2f2f2; box-shadow: inset 0 -1px #ccc; }
.group { height: 81px; padding: 0 16px 0 18px; border-right: 1px solid #ccc; display: flex; flex-direction: column; align-items: center; }
.group.first { padding: 0 14px 0 13px; }
.group.insert { min-width: 118px; }
.group.last { border: 0; padding: 0 23px; }
.icons { display: flex; gap: 18px; height: 60px; }
.icons button { width: 51px; height: 51px; }
.icons svg { width: 51px; height: 51px; }
.icons .sel { box-shadow: 0 0 0 5px #0096db; background: #0096db; }
.ia { font-family: "Liberation Sans", sans-serif; fill: #666; }
.ib { font-family: "Liberation Sans", sans-serif; font-weight: bold; }
.ib:not([fill]) { fill: #666; }
.o { fill: none; stroke: #666; stroke-width: 2px; }
.menu { display: flex; align-items: center; gap: 4px; line-height: 20px; color: #333; }
.menu::after { content: ""; border: 5px solid transparent; border-top: 7px solid #333; border-bottom: 0; }

/* workspace */
.work {
  flex: 1; min-height: 0; position: relative; display: grid;
  grid-template-columns: 480px minmax(0, 1fr) 687px; padding: 0 7px 0 6px;
  background: linear-gradient(#a6a6a6 94%, #9a9a9a); border-bottom: 1px solid #777;
}
.left { position: relative; display: flex; flex-direction: column; padding: 6px 0; min-height: 0; }
.bar { flex: none; height: 40px; background: #f2f2f2; border: 1px solid #d4d4d4; border-bottom: 2px solid #ccc; display: flex; align-items: center; color: #666; padding: 0 18px 0 9px; }
.bar span { flex: 1; }
.bar svg { width: 16px; height: 16px; }
.bar .rew { height: 10px; margin-right: 16px; }
.comments { margin-top: auto; padding-left: 40px; }
.cursor { position: absolute; left: 94px; bottom: 62px; width: 18px; height: 32px; }

.tree { list-style: none; margin: 5px 0 0; padding: 0 3px 0 0; height: 80vh; display: flex; flex-direction: column; color: #3a3a3a; }
.tree li { flex: 1; min-height: 0; display: flex; align-items: center; }
.tree .l0 { padding-left: 30px; } .tree .l1 { padding-left: 59px; } .tree .l2 { padding-left: 88px; } .tree .l3 { padding-left: 116px; }
.tw { flex: none; width: 28px; position: relative; z-index: 1; }
.tw svg { width: 12px; height: 16px; }
.tw .open { height: 12px; }
.box { display: flex; align-items: center; height: 32px; background: #f2f2f2; padding: 0 18px 0 5px; gap: 14px; min-width: 0; overflow: hidden; }
.tree li > .box { box-shadow: 0 0 0 3px #acacac; }
.box > svg { flex: none; width: 26px; height: 24px; }
.tree .off > .box { background: #959595; box-shadow: 0 0 0 3px #aeaeae; }
.off .nm, .off .dots { text-decoration: line-through 1px; }
.wide > .box { flex: 1; padding-right: 13px; }
.wide.off > .box { margin-right: 2px; padding-right: 12px; }
.nm { margin-left: 8px; line-height: 28px; white-space: pre; overflow: hidden; }
.nm.two { line-height: 20px; padding: 4px 0; }
.wide .nm { flex: 1; min-width: 0; }
.dots { flex: none; margin-left: -14px; line-height: 28px; }
.box > .gear2 { margin-left: 11px; margin-right: -9px; }
.box input { appearance: none; flex: none; width: 22px; height: 22px; margin: 0 2px; border-radius: 4px; background: linear-gradient(#fff 50%, #eee 50%); border: 1px solid #ccc; position: relative; }
.box input:checked { background: #8e8e93; border-color: #8e8e93; }
.box input:checked::after { content: ""; position: absolute; left: 7px; top: 2px; width: 6px; height: 12px; border: solid #fff; border-width: 0 3px 3px 0; transform: rotate(40deg); }

/* drawing */
.canvas { padding: 91px 6px 0 18px; }
.sheet { width: 100%; height: auto; }
.dl { fill: none; stroke: #000; }
.dt { font-family: "Liberation Sans", Arial, sans-serif; font-size: 27px; }
.m { text-anchor: middle; }
.tb { font-family: "Liberation Sans", Arial, sans-serif; font-size: 24px; }
.tv { font-family: "Liberation Sans", Arial, sans-serif; font-size: 28px; }
.proj { font-family: "Liberation Sans", Arial, sans-serif; font-size: 57px; }
.ttl { font-family: "Liberation Sans", Arial, sans-serif; font-size: 45px; }
.brand { font-family: Inter, sans-serif; font-weight: 900; font-size: 75px; text-anchor: middle; }
.navbar { position: absolute; left: 50%; bottom: 6px; margin-left: -62px; width: 125px; height: 38px; background: #f0f0f0; display: flex; align-items: center; justify-content: space-between; padding: 0 11px 0 5px; }
.navbar svg { width: 25px; height: 26px; }

/* auto dimension panel */
.right { margin: 6px 0 46px; min-height: 0; background: #f2f2f2; display: flex; flex-direction: column; border: 1px solid #ccc; border-bottom-width: 3px; color: #666; }
.rhead { flex: none; height: 39px; border-bottom: 2px solid #ccc; display: flex; align-items: center; gap: 5px; padding: 0 7px 0 18px; }
.rhead h2 { flex: 1; margin: 0; font-size: 18px; font-weight: 400; }
.rhead svg { width: 15px; height: 15px; }
.rhead .fwd { width: 16px; height: 10px; transform: scaleX(-1); }
.rbody { flex: 1; min-height: 0; display: flex; justify-content: space-between; padding: 0 3px 0 15px; border-bottom: 2px solid #d8d8d8; }
.cards { width: 621px; padding-top: 12px; display: flex; flex-direction: column; gap: 16px; overflow: hidden; }
.card { flex: none; height: 311px; background: #fff; border: 2px solid #dcdcdc; display: grid; grid-template-columns: 295px 1fr; }
.card > svg { width: 295px; height: 307px; opacity: .85; }
.info { border-left: 2px solid #dcdcdc; padding: 17px 20px 0 25px; font-family: "Liberation Sans", Arial, sans-serif; display: flex; flex-direction: column; }
.info h3 { margin: 0; font-size: 21px; line-height: 24px; }
.info p { margin: 6px 0 0; font-size: 21px; line-height: 24px; font-style: italic; }
.card.active { border-color: #74c3e4; height: 313px; }
.active .info { background: #dceef6; }
.info label, .pick, .range { margin-left: -7px; font-size: 19px; line-height: 22px; }
.info .f1 { margin-top: 37px; }
.pick { position: relative; margin-top: 7px; width: 283px; }
.pick select { appearance: none; width: 100%; height: 44px; border: 2px solid #ccc; border-radius: 5px; background: linear-gradient(90deg, #fff 250px, #f8f8f8 250px); font: inherit; color: #666; padding: 0 16px; }
.pick svg { position: absolute; right: 11px; top: 18px; width: 14px; height: 9px; }
.info .f2 { margin-top: 54px; }
.range { display: flex; align-items: center; gap: 9px; margin-top: 7px; padding-left: 3px; width: 281px; }
.range svg { flex: none; width: 20px; height: 20px; }
.range input { appearance: none; flex: 1; min-width: 0; margin: 0; height: 26px; background: linear-gradient(90deg, #808080 53%, #f2f2f2 53%) center / 100% 3px no-repeat; }
.range input::-webkit-slider-thumb { appearance: none; width: 8px; height: 26px; border-radius: 2px; background: #808080; }
.vscroll { width: 10px; background: #c0c1c4; }
.vscroll i { display: block; height: 79%; background: #98989b; border: 1px solid #777; border-radius: 5px; }
.share { flex: none; height: 66px; border-bottom: 2px solid #dcdcdc; font-family: "Liberation Sans", Arial, sans-serif; font-size: 21px; line-height: 24px; display: flex; justify-content: center; align-items: center; gap: 17px; padding: 2px 26px 0 0; }
.share a { color: #0070b8; }
.actions { flex: none; height: 56px; display: flex; justify-content: flex-end; align-items: center; gap: 29px; padding-right: 18px; padding-top: 2px; }
.actions button { width: 96px; height: 33px; background: #e8e8e8; border: 1px solid #b0b0b0; font-size: 19px; line-height: 28px; }

/* filmstrip */
.film { flex: none; height: 80px; background: #ececec; padding-top: 5px; }
.hscroll { height: 9px; margin: 0 6px; background: #c0c1c4; }
.hscroll i { display: block; width: 83%; height: 9px; background: #989898; border: 1px solid #777; border-radius: 4px; }
.strip { display: grid; grid-template-columns: repeat(53, minmax(0, 1fr)); padding: 8px 11px 0 14px; justify-items: center; }
.strip button { width: 61px; height: 45px; }
.strip svg { width: 61px; height: 45px; background: #fff; }
.strip .cur { box-shadow: 0 0 0 5px #0096db; border-radius: 1px; }
```
FILE: app.js
```javascript
// Browser tree: [level, kind, name, icons, second line]
const S = 'sheet', C = 'cube';
const rows = [
  [0, 'open wide', 'B–814 – MAINFRAME ASSEMBLY Canopy', 'drawing', ''],
  [1, '', 'Document Settings', 'gear'],
  [1, 'open', 'Component2', 'page'],
  [2, '', 'Sheet Settings', 'gear'],
  [2, 'open wide', 'B–814 – MAINFRAME ASSEMBLY C', S, ''],
  [3, '', 'Bodies', 'eyeoff folder'],
  [3, 'off wide', '814–MA–Main–Body–889', S, ''],
  [3, 'on wide', 'Redacted–902135–', 'eye cube', ''],
  [3, 'off wide', '814–Fron–Primary–Slide–', S, ''],
  [3, 'off wide', 'Bracket–Adap–445–Slide:1', S],
  [3, 'off wide', '814–Hull–Initiate–5543JI', S, ''],
  [3, 'off wide', '814–Hull–Initiate–5544JI', S, ''],
  [3, 'off wide', 'intermediate–8868–Brac', C, ''],
  [3, 'off', 'Colum–shaft–bracket:1', C],
  [3, 'off wide', 'Stomp–996–814–Hull–In', C, ''],
  [3, 'off', 'Breather–Plate–0765:1', S],
  [3, 'off', 'Bracket–mount–88–Li3:1', C],
  [3, 'off wide', 'Front – plate–mount–64x', C, ''],
  [3, 'off wide', 'Under–PLate Mount– 35x', C, ''],
  [3, 'off wide', 'Primary–top 814–Hull–In', S, ''],
  [3, 'off', 'Access–hatch–45554:1', C],
  [3, 'off', 'Gasket–Extr.–Int0:1', C],
  [3, 'off wide', 'Redacted–902135– Plate', C, ''],
  [3, 'off wide', 'Stomp–PLate–Mirr–3345:1', S],
  [3, 'off wide', 'Access–Panel–Assembly', C, ''],
  [3, 'off', 'Support–44590–LK98:1', C],
  [3, 'off wide', '514–XY–Side–Support–R', S, ':1'],
  [3, 'off wide', '514–XY–Side–Support–R', C, ''],
  [3, 'off wide', '514–XY–Side–Support–R', S, ''],
  [3, 'off wide', 'Valve–Core–MaxPro–993', C, ':1'],
  [3, 'off wide', '230–ZN–Primary–Spring–', C, ':1'],
  [3, 'off wide', '450–RT–Outer–Seal–Ring', C, ':1'],
  [3, 'off wide', 'Gasket–Seal–Xtra–Torqu', C, ':1'],
  [3, 'off wide', '370–RF–Main–Gear–Shift', C, ':1'],
  [3, 'off wide', '621–PL–Upper–Guide–Ro', C, ':1'],
  [3, 'off wide', '621–PL–Upper–Guide–Ro', C, ' (1):1'],
  [3, 'off wide', '610–MA–Upper–Couplin', S, ':1'],
  [3, 'off wide', '610–MA–Upper–Couplin', C, ' (1):1'],
  [3, 'off wide', '811–QS–Lower–Hinge–A', C, ':1']
];
for (let n = 34; n < 43; n++) rows.push([3, 'off', `Component${n}:1`, C]);

document.getElementById('tree').innerHTML = rows.map(([lv, kind, name, icons, more]) => {
  const open = kind.includes('open');
  const check = /\b(off|on)\b/.test(kind);
  const tag = check ? 'label' : 'div';
  return `<li class="l${lv} ${kind.replace('open', '')}">
    <span class="tw"><svg class="${open ? 'open' : ''}"><use href="#i-${open ? 'open' : 'closed'}"/></svg></span>
    <${tag} class="box">${check ? `<input type="checkbox"${kind.includes('on wide') ? ' checked' : ''}>` : ''}
    ${icons.split(' ').map(i => `<svg><use href="#i-${i}"/></svg>`).join('')}
    <span class="nm${more ? ' two' : ''}">${name}${more ? '\n' + more : ''}</span>${more !== undefined ? '<span class="dots">...</span>' : ''}
    ${name === 'Document Settings' ? '<svg class="gear2"><use href="#i-gearedit"/></svg>' : ''}</${tag}></li>`;
}).join('');

// Filmstrip: view blocks of each sheet as x,y,w,h on a 76 x 56 preview
const looks = [
  '20,16,2,14 27,12,10,4 26,18,12,3 28,21,3,10 33,20,3,11 26,31,12,2 42,17,2,12',
  '22,14,2,12 27,10,10,6 26,17,3,8 30,18,8,9 39,16,2,10 43,14,2,14 28,28,3,3 34,28,3,3',
  '18,20,24,3 18,20,3,13 22,24,18,2 24,28,14,5 40,20,2,12',
  '24,14,14,4 20,20,4,14 24,18,20,3 42,20,4,14 26,32,16,3',
  '10,18,14,16 28,20,6,3 28,24,4,4 38,20,20,2 38,23,20,3',
  '12,12,20,10 14,23,14,2 12,26,18,12 40,16,4,6 42,24,2,8',
  '14,14,12,6 14,22,14,10 28,22,4,4 30,28,6,6 36,26,3,8',
  '24,12,14,3 20,16,20,4 20,20,4,10 36,20,4,10 42,16,2,12 24,30,14,5',
  '6,12,4,26 12,14,6,20 20,18,4,14 26,20,8,3 28,24,6,6',
  '24,8,16,3 20,16,3,14 26,14,12,5 24,20,4,12 36,18,5,14 44,18,2,10',
  '24,12,16,6 18,18,28,3 20,22,8,10 30,22,14,4 30,28,16,4',
  '26,12,10,5 20,20,3,14 24,20,14,3 38,20,3,14 26,32,12,3 30,24,8,2',
  '20,20,3,8 26,16,12,14 42,20,3,8 46,16,2,14',
  '12,22,6,6 20,16,16,14 20,33,14,3 38,22,6,6 48,22,18,2 48,26,18,2',
  '16,10,32,4 14,16,22,8 38,16,20,8 16,26,36,3 14,32,40,2',
  '18,16,30,4 16,20,34,4 18,24,32,3 50,20,8,10 18,32,30,2'
];
const rects = s => s.split(' ').map(r => { const [x, y, w, h] = r.split(','); return `M${x} ${y}h${w}v${h}h-${w}z`; }).join('');
let html = '';
for (let i = 0; i < 53; i++) {
  const empty = i >= 36 && i % 2 === 0;
  let art;
  if (empty) art = '<path d="M31 23h10v10H31z" fill="none" stroke="red" stroke-width="2"/><path d="M52 4h20v4H52z"/>';
  else if (i === 0) art = `<path d="${rects('8,8,26,3 8,12,3,28 13,12,3,20 18,16,5,24 26,12,8,24 12,40,22,6 36,6,36,28')}"/>`;
  else art = `<path d="${rects(looks[(i - 1 + (i > 16 ? 5 : 0)) % looks.length])}"/>`;
  html += `<button${i === 1 ? ' class="cur"' : ''} aria-label="Sheet ${i + 1}"><svg viewBox="0 0 76 56">
    <path d="M0 4h76v48H0z" fill="#999"/><path d="M2 4h72v46H2z"/><path d="M5 6h67v42H5z" fill="#fff"/>${art}
    <path d="M38 36h34v12H38z"/><path d="M48 38h24v2H48zM41 41h7v5h-7z" fill="#fff"/></svg></button>`;
}
document.getElementById('strip').innerHTML = html;
```
